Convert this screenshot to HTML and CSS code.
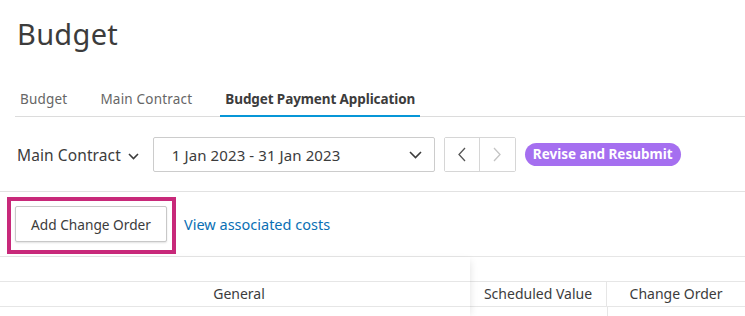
FILE: index.html
```html
<!DOCTYPE html>
<html lang="en">
<head>
    <meta charset="UTF-8">
    <title>Budget</title>
    <link rel="stylesheet" href="styles.css">
</head>
<body>
    <h1 class="page-title">Budget</h1>

    <!-- tabs -->
    <ul class="m-tabs">
        <li class="tab">Budget</li>
        <li class="tab">Main Contract</li>
        <li class="tab z-active">Budget Payment Application</li>
    </ul>

    <!-- toolbar -->
    <div class="m-toolbar">
        <div class="contract-pick">
            Main Contract
            <svg class="caret" width="11" height="7" viewBox="0 0 11 7"><path d="M1 1l4.5 4.5L10 1" fill="none" stroke="#3c3c3c" stroke-width="1.6"/></svg>
        </div>
        <div class="period-select">
            <span>1 Jan 2023 - 31 Jan 2023</span>
            <svg width="13" height="8" viewBox="0 0 13 8"><path d="M1 1l5.5 5.5L12 1" fill="none" stroke="#3c3c3c" stroke-width="1.6"/></svg>
        </div>
        <div class="pager">
            <button class="pager-btn"><svg width="8" height="15" viewBox="0 0 8 15"><path d="M7 1L1 7.5 7 14" fill="none" stroke="#555" stroke-width="1.3"/></svg></button>
            <button class="pager-btn disabled"><svg width="8" height="15" viewBox="0 0 8 15"><path d="M1 1l6 6.5L1 14" fill="none" stroke="#c4c4c4" stroke-width="1.3"/></svg></button>
        </div>
        <span class="badge">Revise and Resubmit</span>
    </div>

    <!-- actions -->
    <div class="m-actions">
        <div class="highlight">
            <button class="btn">Add Change Order</button>
        </div>
        <a class="link" href="#">View associated costs</a>
    </div>

    <!-- table head -->
    <div class="m-table">
        <div class="frozen">
            <div class="cell group"></div>
            <div class="cell head">General</div>
        </div>
        <div class="scroll">
            <div class="cell group"></div>
            <div class="row">
                <div class="cell head col">Scheduled Value</div>
                <div class="cell head col last">Change Order</div>
            </div>
            <div class="row body">
                <div class="col"></div>
                <div class="col last"></div>
            </div>
        </div>
    </div>
</body>
</html>
```

FILE: styles.css
```css
html,body{
    margin: 0;
    padding: 0;
    background: #fff;
    color: #3c3c3c;
    font-family: "Noto Sans", "Open Sans", sans-serif;
}
.page-title {
    margin: 0;
    padding: 14px 17px 27px;
    font-size: 29px;
    font-weight: normal;
    line-height: 40px;
    letter-spacing: 0.3px;
}

/* tabs */
.m-tabs {
    display: flex;
    gap: 23px;
    margin: 0 0 0 15px;
    padding: 0;
    list-style: none;
    border-bottom: 1px solid #dcdcdc;
}
.m-tabs .tab {
    padding: 8px 5px 6px;
    margin-bottom: -1px;
    font-size: 13.5px;
    line-height: 20px;
    letter-spacing: 0.2px;
    color: #666;
    border-bottom: 2px solid transparent;
}
.m-tabs .tab.z-active {
    color: #3c3c3c;
    font-weight: bold;
    letter-spacing: -0.1px;
    border-bottom-color: #0696d7;
}

/* toolbar */
.m-toolbar {
    display: flex;
    align-items: center;
    height: 35px;
    padding: 20px 16px 19px 17px;
    border-bottom: 1px solid #e2e2e2;
}
.contract-pick {
    display: flex;
    align-items: center;
    gap: 7px;
    font-size: 15.5px;
    letter-spacing: 0.1px;
    margin-right: 14px;
}
.contract-pick .caret {
    margin-top: 3px;
}
.period-select {
    box-sizing: border-box;
    display: flex;
    align-items: center;
    justify-content: space-between;
    width: 282px;
    height: 35px;
    padding: 0 12px 0 18px;
    border: 1px solid #ccc;
    border-radius: 2px;
    font-size: 15px;
    letter-spacing: 0.1px;
}
.pager {
    display: flex;
    margin-left: 9px;
    border: 1px solid #d6d6d6;
    border-radius: 2px;
}
.pager-btn {
    display: flex;
    align-items: center;
    justify-content: center;
    width: 35px;
    height: 33px;
    padding: 0;
    border: 0;
    background: #fff;
}
.pager-btn:first-child {
    border-right: 1px solid #d6d6d6;
}
.badge {
    margin-left: 9px;
    padding: 0 8px;
    height: 23px;
    line-height: 23px;
    border-radius: 12px;
    background: #a56ff0;
    color: #fff;
    font-size: 13.5px;
    font-weight: bold;
}

/* actions */
.m-actions {
    display: flex;
    align-items: center;
    padding: 5px 0 2px 7px;
    border-bottom: 1px solid #e6e6e6;
}
.highlight {
    padding: 5px 5px 8px 4px;
    border: 4px solid #c8297a;
}
.btn {
    display: block;
    width: 152px;
    height: 36px;
    padding: 0;
    border: 1px solid #c8c8c8;
    border-radius: 2px;
    background: #fff;
    box-shadow: 0 1px 2px rgba(0,0,0,0.12);
    color: #3c3c3c;
    font-family: inherit;
    font-size: 13.7px;
}
.link {
    margin: 0 0 3px 8px;
    color: #0a6fb4;
    font-size: 14.5px;
    text-decoration: none;
}

/* table */
.m-table {
    display: flex;
}
.m-table .cell {
    box-sizing: border-box;
    height: 25px;
    border-bottom: 1px solid #e6e6e6;
    font-size: 14px;
    line-height: 24px;
    text-align: center;
    color: #3c3c3c;
}
.frozen {
    width: 473px;
    position: relative;
    z-index: 1;
    box-shadow: 4px 0 8px -4px rgba(0,0,0,0.12);
}
.frozen .head {
    padding-left: 8px;
}
.scroll {
    flex: 1;
}
.scroll .row {
    display: flex;
}
.scroll .col {
    width: 137px;
    border-right: 1px solid #e6e6e6;
}
.scroll .col.last {
    flex: 1;
    border-right: 0;
}
.scroll .body .col {
    height: 12px;
}
```
